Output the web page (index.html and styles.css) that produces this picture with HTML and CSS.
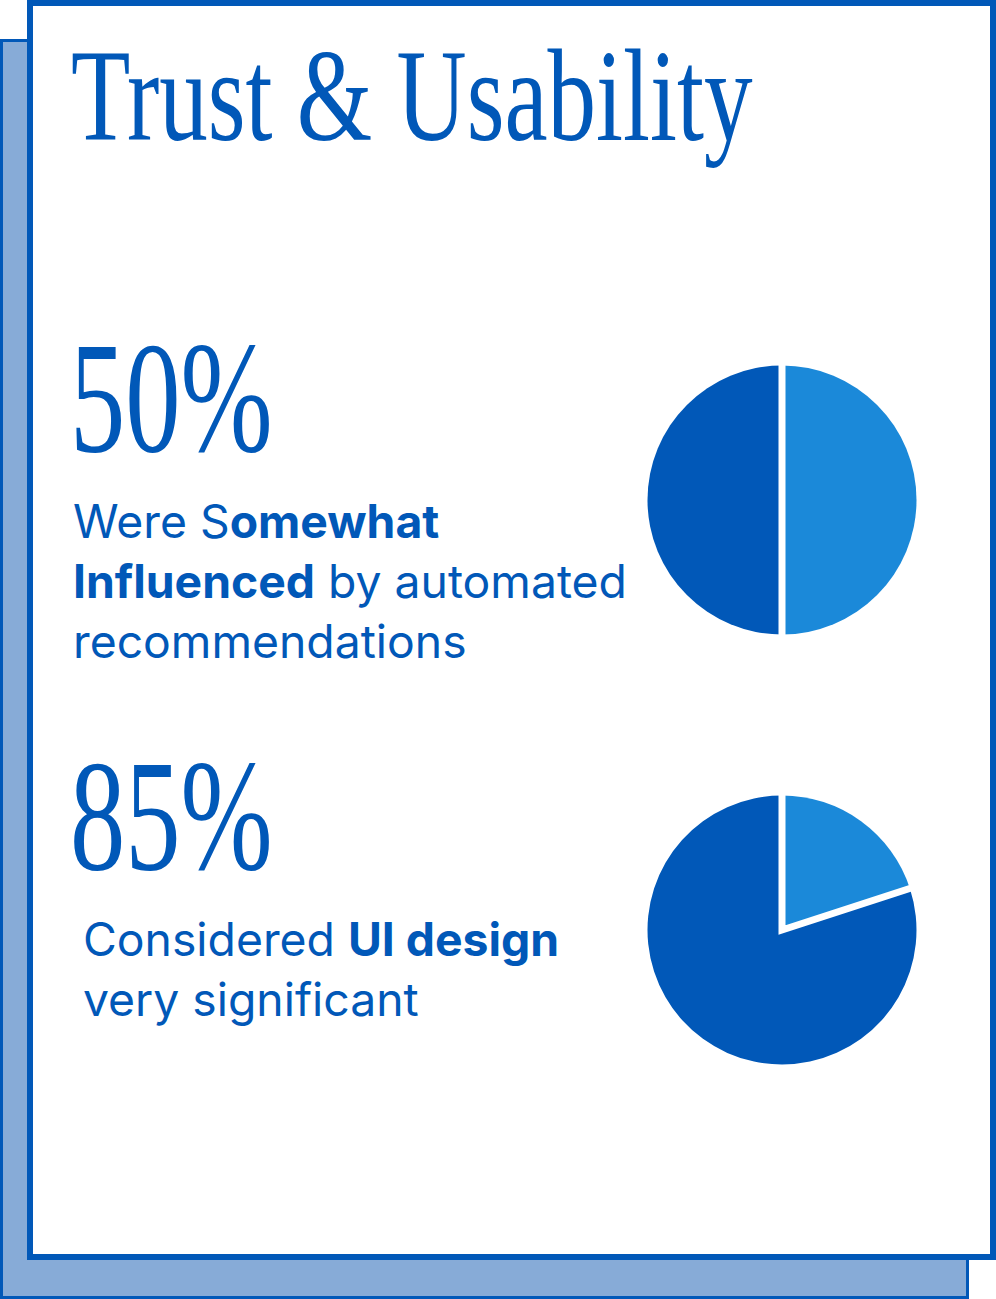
FILE: index.html
```html
<!DOCTYPE html>
<html lang="en">
<head>
<meta charset="utf-8">
<title>Trust &amp; Usability</title>
<link rel="stylesheet" href="styles.css">
</head>
<body>
<div class="stack">
  <div class="card-shadow"></div>
  <section class="card">
    <h1 class="title"><span class="condensed">Trust &amp; Usability</span></h1>

    <div class="stat stat-one">
      <div class="stat-text">
        <div class="stat-number"><span class="condensed">50%</span></div>
        <p class="stat-desc">Were S<strong>omewhat</strong> <strong>Influenced</strong> by automated recommendations</p>
      </div>
      <svg class="pie pie-one" viewBox="0 0 270 270" width="270" height="270" aria-hidden="true">
        <path d="M135,0.5 A134.5,134.5 0 0 0 135,269.5 Z" fill="#0158b8"/>
        <path d="M135,0.5 A134.5,134.5 0 0 1 135,269.5 Z" fill="#1b89d9"/>
        <line x1="135" y1="-2" x2="135" y2="272" stroke="#fff" stroke-width="7"/>
      </svg>
    </div>

    <div class="stat stat-two">
      <div class="stat-text">
        <div class="stat-number"><span class="condensed">85%</span></div>
        <p class="stat-desc stat-desc-indent">Considered <strong>UI design</strong> very significant</p>
      </div>
      <svg class="pie pie-two" viewBox="0 0 270 270" width="270" height="270" aria-hidden="true">
        <path d="M135,135 L262.9,93.4 A134.5,134.5 0 1 1 135,0.5 Z" fill="#0158b8"/>
        <path d="M135,135 L135,0.5 A134.5,134.5 0 0 1 262.9,93.4 Z" fill="#1b89d9"/>
        <polyline points="135,-4 135,135 273,90.2" fill="none" stroke="#fff" stroke-width="7" stroke-linejoin="miter" stroke-miterlimit="10"/>
      </svg>
    </div>
  </section>
</div>
</body>
</html>
```

FILE: styles.css
```css
html, body {
  margin: 0;
  padding: 0;
  background: #ffffff;
}

.stack {
  display: grid;
  width: 996px;
  height: 1299px;
}

.card-shadow,
.card {
  grid-area: 1 / 1;
  box-sizing: border-box;
  width: 969px;
  height: 1260px;
}

.card-shadow {
  margin-top: 39px;
  background: #87abd7;
  border: 3px solid #0158b8;
}

.card {
  margin-left: 27px;
  background: #ffffff;
  border: 6px solid #0158b8;
  padding: 24px 73px 0 40px;
  color: #0158b8;
  display: flex;
  flex-direction: column;
}

.condensed {
  display: inline-block;
  white-space: nowrap;
  transform-origin: left center;
}

.title {
  margin: 0 0 0 -2px;
  font-family: "Liberation Serif", "Times New Roman", serif;
  font-weight: 400;
  font-size: 131px;
  line-height: 131px;
  height: 131px;
}

.title .condensed {
  transform: scaleX(0.741);
}

.stat {
  display: flex;
  justify-content: space-between;
  align-items: flex-start;
}

.stat-one {
  margin-top: 158px;
}

.stat-two {
  margin-top: 66px;
}

.stat-text {
  flex: 1 1 auto;
  min-width: 0;
}

.stat-number {
  margin-left: -3px;
  font-family: "Liberation Serif", "Times New Roman", serif;
  font-size: 158px;
  line-height: 158px;
  height: 158px;
}

.stat-number .condensed {
  transform: scaleX(0.70);
}

.stat-desc {
  margin: 14px 0 0;
  box-sizing: border-box;
  width: 570px;
  font-family: Inter, "Noto Sans", sans-serif;
  font-size: 46.3px;
  line-height: 60px;
  font-weight: 400;
}

.stat-desc strong {
  font-weight: 700;
}

.stat-desc-indent {
  padding-left: 10px;
}

.pie {
  display: block;
  flex: none;
}

.pie-one {
  margin-top: 46px;
}

.pie-two {
  margin-top: 58px;
}
```
